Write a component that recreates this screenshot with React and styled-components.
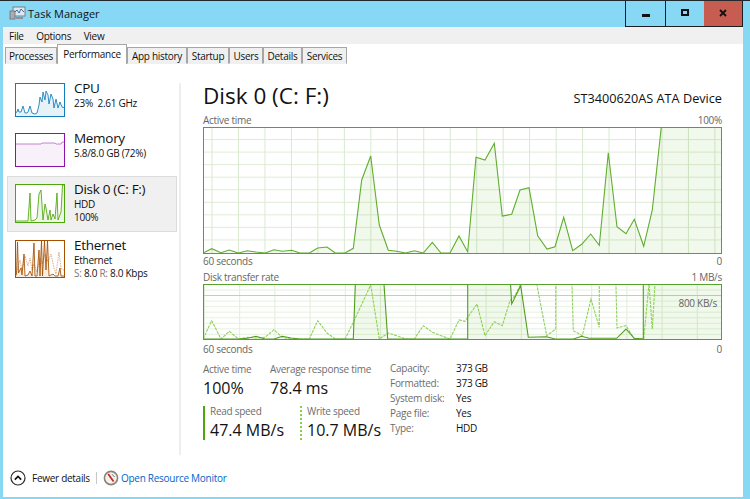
import styled, { createGlobalStyle } from "styled-components";

const sans = `"Open Sans", "Noto Sans", sans-serif`;

const GlobalStyle = createGlobalStyle`
    html, body {
        margin: 0;
        padding: 0;
        background: #87d8f5;
        overflow: hidden;
    }
    * { box-sizing: border-box; }
`;

const TABS = [
    { name: "Processes", width: 52 },
    { name: "Performance", width: 70 },
    { name: "App history", width: 60 },
    { name: "Startup", width: 42 },
    { name: "Users", width: 34 },
    { name: "Details", width: 39 },
    { name: "Services", width: 45 },
];

// graph samples, in pixels inside each chart
const ACTIVE_TIME = [
    [0, 126], [8.7, 121.7], [18, 125.7], [26.3, 123], [35.3, 126], [44.3, 123.7], [53, 125], [62, 126], [71, 122.7],
    [79.3, 124.3], [88.7, 123.3], [97, 126], [106.3, 126], [114.7, 121], [124, 120], [132.3, 126], [142, 126],
    [150.3, 121.3], [158.7, 53], [167.7, 29], [176.3, 98], [185.3, 123.3], [193.7, 124.3], [202.7, 126], [211.3, 123.7],
    [220.3, 126], [229.3, 115.3], [238, 126], [247, 126], [256, 109], [262, 120], [264.7, 124.7], [273, 30.3], [282, 33],
    [291.3, 16.3], [299.3, 89], [308.7, 87.3], [317, 63], [326, 60.7], [334.7, 108.7], [344, 122], [352, 119.7],
    [360.7, 90.3], [369.7, 123.7], [378.7, 117.3], [387.7, 107], [396.3, 118.3], [405.3, 25.7], [414, 99.7], [423, 106.7],
    [431.3, 92.3], [440.7, 119.3], [449.3, 83], [458.3, 0], [519, 0],
];

const WRITE_RATE = [
    [0, 55], [8.7, 36.7], [18, 55], [26.3, 47.3], [35.3, 55], [44.3, 53.3], [53, 54], [62, 53.3], [71, 45.7], [79.3, 53.3],
    [88.7, 55], [106.3, 55], [114.7, 36.7], [124, 49], [132.3, 55], [142, 55], [150.3, 38.3], [167.7, 1], [176.3, 55],
    [185.3, 49], [193.7, 51.7], [202.7, 55], [211.3, 55], [220.3, 41.7], [229.3, 48.3], [238, 51.7], [247, 55], [256, 36],
    [262, 37.3], [274, 20], [282, 51.7], [291.3, 37.7], [299.3, 41.7], [307, 16.7], [312, 11.7], [317.7, 0], [321, -10],
    [333, -10], [333.7, 0], [343.7, 51.7], [352.7, 45], [352.7, -10], [368.7, -10], [370.3, 46.7], [379.3, 51.7], [388, 15],
    [396.3, 43.3], [396.3, -10], [412.7, -10], [414, 44], [423, 41.7], [431.3, 55], [440.7, 55], [446, 0], [449.3, 45],
    [452, 0], [453, -10], [519, -10],
];

const READ_RATE = [
    [0, 55], [35.3, 55], [44.3, 54.3], [53, 52.3], [62, 55], [71, 55], [79.3, 52.3], [88, 54], [97, 55], [150.3, 55],
    [152.7, -10], [180.3, -10], [184.7, 55], [264.7, 55], [264.7, -10], [307, -10], [308.7, 20], [317.7, 1.7], [325.3, 53.3],
    [343.7, 52.7], [352, 55], [370.3, 55], [378.7, 52.3], [386, 54.3], [413.7, 54.3], [423, 45], [431.3, 54.3], [440.3, 55],
    [440.3, -10], [519, -10],
];

const CPU_THUMB = [
    [0, 30], [2, 29], [3, 26], [4, 29], [6, 29], [8, 23], [10, 30], [12, 30], [13, 29], [15, 23], [17, 30], [20, 31], [22, 30], [24, 22],
    [25, 14], [27, 19], [28, 9], [30, 17], [31, 8], [33, 12], [34, 21], [36, 11], [38, 16], [39, 25], [41, 16], [43, 25], [45, 19], [47, 24], [50, 25],
];
const MEM_THUMB = [[0, 11], [26, 11], [27, 10], [40, 10], [41, 11], [46, 11], [47, 9], [50, 9]];
const DISK_THUMB = [
    [0, 37], [13, 37], [15, 9], [16, 37], [20, 36], [22, 34], [24, 10], [26, 6], [28, 36], [30, 20], [31, 24], [33, 36], [35, 26], [36, 36], [38, 30],
    [40, 35], [42, 9], [43, 36], [46, 28], [47.5, 1], [50, 1],
];
const NET_SOLID = [
    [0, 37], [1.5, 34], [2.5, 2], [3.5, 33], [6, 28], [7, 35], [9, 14], [10, 36], [13, 35], [15, 31], [17, 36], [19, 3], [20, 36], [22, 36], [24, 10], [25, 36],
    [26.5, 1], [27.5, 36], [29.5, 1], [31, 30], [32.5, 1], [34, 36], [38, 34], [40, 36], [43, 36], [45, 28], [46, 36], [50, 36],
];
const NET_DASHED = [
    [0, 37], [3, 27], [5, 20], [7, 30], [10, 16], [13, 26], [15, 18], [17, 30], [19, 24], [22, 32], [25, 18], [27, 24], [30, 14], [33, 22], [36, 14], [39, 28],
    [41, 34], [44, 12], [46, 28], [48, 30], [50, 30],
];

const toPoints = (pts) => pts.map(([x, y]) => `${x},${y}`).join(" ");

const range = (start, step, end) => {
    const out = [];
    for (let v = start; v < end; v += step) out.push(v);
    return out;
};

function Thumb({ color, height, data, dashed, fillOpacity = 0.1, lineOpacity = 0.85 }) {
    const closed = [[0, height], ...data, [50, height]];
    return (
        <ThumbBox $color={color} $height={height}>
            <svg width="48" height={height - 2} viewBox={`1 1 48 ${height - 2}`}>
                <polygon points={toPoints(closed)} fill={color} fillOpacity={fillOpacity} />
                {dashed && <polyline points={toPoints(dashed)} fill="none" stroke={color} strokeOpacity="0.45" strokeWidth="1" strokeDasharray="1.5 1" />}
                <polyline points={toPoints(data)} fill="none" stroke={color} strokeOpacity={lineOpacity} strokeWidth="1" />
            </svg>
        </ThumbBox>
    );
}

function ActiveChart() {
    const w = 517;
    const h = 125;
    return (
        <ChartBox $height={127}>
            <svg width={w} height={h} viewBox={`1 1 ${w} ${h}`}>
                {range(12.55, 12.55, 125).map((y) => <line key={y} x1="0" x2={w + 2} y1={y} y2={y} stroke="#dfecd7" strokeWidth="1" />)}
                {range(9, 26.47, 519).map((x) => <line key={x} x1={x} x2={x} y1="0" y2={h + 2} stroke="#d9e9cf" strokeWidth="1" />)}
                <polygon points={toPoints([[0, 127], ...ACTIVE_TIME, [519, 127]])} fill="#4da60c" fillOpacity="0.08" />
                <polyline points={toPoints(ACTIVE_TIME)} fill="none" stroke="#5fae2e" strokeWidth="1.1" />
            </svg>
        </ChartBox>
    );
}

function TransferChart() {
    const w = 517;
    const h = 54;
    return (
        <ChartBox $height={56}>
            <svg width={w} height={h} viewBox={`1 1 ${w} ${h}`}>
                {range(6, 5.55, 55).map((y) => <line key={y} x1="0" x2={w + 2} y1={y} y2={y} stroke="#e6f1df" strokeWidth="1" />)}
                {range(1.5, 35.2, 519).map((x) => <line key={x} x1={x} x2={x} y1="0" y2={h + 2} stroke="#e0edd8" strokeWidth="1" />)}
                <line x1="0" x2={w + 2} y1="11.5" y2="11.5" stroke="#b4dba0" strokeWidth="1" />
                <polygon points={toPoints([[0, 56], ...READ_RATE, [519, 56]])} fill="#4da60c" fillOpacity="0.08" />
                <polyline points={toPoints(WRITE_RATE)} fill="none" stroke="#8ed257" strokeWidth="1.1" strokeDasharray="3 1" />
                <polyline points={toPoints(READ_RATE)} fill="none" stroke="#4f9e1e" strokeWidth="1.1" />
            </svg>
            <ChartNote>800 KB/s</ChartNote>
        </ChartBox>
    );
}

export default function App() {
    return (
        <>
            <GlobalStyle />
            <Window>
                <TitleBar>
                    <AppTitle>
                        <svg width="17" height="14" viewBox="0 0 17 14">
                            <rect x="4" y="1" width="12" height="9" fill="#dfe7ee" stroke="#76808a" />
                            <polyline points="5,7 8,4 10,7 12,3 15,6" fill="none" stroke="#3f6f9f" strokeWidth="1" />
                            <rect x="1" y="5" width="5" height="8" fill="#a7adb3" stroke="#6a6f75" strokeWidth="0.8" />
                            <rect x="7" y="11" width="7" height="2" fill="#8d939a" />
                        </svg>
                        Task Manager
                    </AppTitle>
                    <Controls>
                        <ControlButton><MinGlyph /></ControlButton>
                        <ControlButton><MaxGlyph /></ControlButton>
                        <ControlButton $close>
                            <svg width="8" height="8" viewBox="0 0 8 8">
                                <path d="M1 1 L7 7 M7 1 L1 7" stroke="#111" strokeWidth="1.8" />
                            </svg>
                        </ControlButton>
                    </Controls>
                </TitleBar>

                <MenuBar>
                    <span>File</span>
                    <span>Options</span>
                    <span>View</span>
                </MenuBar>

                <TabStrip>
                    {TABS.map((t) => <Tab key={t.name} $width={t.width} $active={t.name === "Performance"}>{t.name}</Tab>)}
                </TabStrip>

                <Body>
                    <Sidebar>
                        <Item>
                            <Thumb color="#117dbb" height={34} data={CPU_THUMB} />
                            <ItemText>
                                <ItemName>CPU</ItemName>
                                <ItemSub>23%&nbsp; 2.61 GHz</ItemSub>
                            </ItemText>
                        </Item>
                        <Item>
                            <Thumb color="#8b12ae" height={34} data={MEM_THUMB} fillOpacity={0.06} lineOpacity={0.5} />
                            <ItemText>
                                <ItemName>Memory</ItemName>
                                <ItemSub>5.8/8.0 GB (72%)</ItemSub>
                            </ItemText>
                        </Item>
                        <Item $selected>
                            <Thumb color="#4da60c" height={39} data={DISK_THUMB} />
                            <ItemText>
                                <ItemName>Disk 0 (C: F:)</ItemName>
                                <ItemSub>HDD</ItemSub>
                                <ItemSub>100%</ItemSub>
                            </ItemText>
                        </Item>
                        <Item>
                            <Thumb color="#a74f01" height={38} data={NET_SOLID} dashed={NET_DASHED} />
                            <ItemText>
                                <ItemName>Ethernet</ItemName>
                                <ItemSub>Ethernet</ItemSub>
                                <ItemSub><Dim>S:</Dim> 8.0 <Dim>R:</Dim> 8.0 Kbps</ItemSub>
                            </ItemText>
                        </Item>
                    </Sidebar>

                    <Main>
                        <Heading>
                            <Title>Disk 0 (C: F:)</Title>
                            <Device>ST3400620AS ATA Device</Device>
                        </Heading>

                        <ChartLabels $gap={1}>
                            <span>Active time</span>
                            <span>100%</span>
                        </ChartLabels>
                        <ActiveChart />
                        <ChartLabels $gap={1}>
                            <span>60 seconds</span>
                            <span>0</span>
                        </ChartLabels>

                        <ChartLabels $gap={3}>
                            <span>Disk transfer rate</span>
                            <span>1 MB/s</span>
                        </ChartLabels>
                        <TransferChart />
                        <ChartLabels $gap={3}>
                            <span>60 seconds</span>
                            <span>0</span>
                        </ChartLabels>

                        <Stats>
                            <StatGrid>
                                <Stat>
                                    <StatLabel>Active time</StatLabel>
                                    <StatValue>100%</StatValue>
                                </Stat>
                                <Stat>
                                    <StatLabel>Average response time</StatLabel>
                                    <StatValue>78.4 ms</StatValue>
                                </Stat>
                                <Speed>
                                    <StatLabel>Read speed</StatLabel>
                                    <StatValue>47.4 MB/s</StatValue>
                                </Speed>
                                <Speed $dotted>
                                    <StatLabel>Write speed</StatLabel>
                                    <StatValue>10.7 MB/s</StatValue>
                                </Speed>
                            </StatGrid>
                            <Props>
                                <dt>Capacity:</dt><dd>373 GB</dd>
                                <dt>Formatted:</dt><dd>373 GB</dd>
                                <dt>System disk:</dt><dd>Yes</dd>
                                <dt>Page file:</dt><dd>Yes</dd>
                                <dt>Type:</dt><dd>HDD</dd>
                            </Props>
                        </Stats>
                    </Main>
                </Body>

                <Footer>
                    <svg width="16" height="16" viewBox="0 0 16 16">
                        <circle cx="8" cy="8" r="7" fill="#fff" stroke="#2b2b2b" strokeWidth="1.2" />
                        <path d="M4.8 9.6 L8 6.4 L11.2 9.6" fill="none" stroke="#111" strokeWidth="1.7" />
                    </svg>
                    <FooterText>Fewer details</FooterText>
                    <FooterDivider />
                    <svg width="16" height="16" viewBox="0 0 16 16">
                        <circle cx="8" cy="8" r="6.6" fill="#f4f1ea" stroke="#8b8378" strokeWidth="1.6" />
                        <path d="M5.2 4 L10.6 11.6" stroke="#c4262e" strokeWidth="1.7" />
                        <path d="M9 4.2 L11.6 7" stroke="#555" strokeWidth="0.8" />
                    </svg>
                    <ResourceLink>Open Resource Monitor</ResourceLink>
                </Footer>
            </Window>
        </>
    );
}

const Window = styled.div`
    width: 750px;
    height: 499px;
    display: flex;
    flex-direction: column;
    background: #87d8f5;
    border-top: 1px solid #23292c;
    font-family: ${sans};
    font-size: 10px;
    letter-spacing: -0.28px;
    color: #111;
`;

const TitleBar = styled.header`
    height: 26px;
    flex: none;
    display: flex;
    justify-content: space-between;
    padding: 0 7px 0 9px;
`;

const AppTitle = styled.div`
    display: flex;
    align-items: center;
    gap: 2px;
    font-size: 11px;
    letter-spacing: 0;
    padding-bottom: 2px;
`;

const Controls = styled.div`
    display: flex;
    height: 26px;
    border: solid #1b1f21;
    border-width: 0 1px 1px 1px;
`;

const ControlButton = styled.div`
    width: ${(p) => (p.$close ? "38px" : "39px")};
    display: flex;
    align-items: center;
    justify-content: center;
    background: ${(p) => (p.$close ? "#c75c50" : "transparent")};
    border-left: ${(p) => (p.$close ? "none" : "1px solid #1b1f21")};
    &:first-child { border-left: none; }
    padding-bottom: 1px;
`;

const MinGlyph = styled.span`
    width: 8px;
    height: 3px;
    margin-top: 4px;
    background: #111;
`;

const MaxGlyph = styled.span`
    width: 8px;
    height: 7px;
    border: 2px solid #111;
    margin-top: -2px;
`;

const MenuBar = styled.nav`
    height: 17px;
    flex: none;
    margin: 0 7px 0 3px;
    padding: 0 0 0 6px;
    display: flex;
    align-items: center;
    gap: 12.5px;
    background: #f0f0f0;
`;

const TabStrip = styled.div`
    height: 20px;
    flex: none;
    margin: 0 7px 0 3px;
    padding: 0 0 0 2px;
    display: flex;
    align-items: flex-end;
    background: #fff;
`;

const Tab = styled.div`
    width: ${(p) => p.$width}px;
    height: ${(p) => (p.$active ? "20px" : "17px")};
    padding-bottom: ${(p) => (p.$active ? "2px" : "0")};
    display: flex;
    align-items: center;
    justify-content: center;
    background: ${(p) => (p.$active ? "#fff" : "#f0f0f0")};
    border: 1px solid #a6a6a6;
    border-bottom: ${(p) => (p.$active ? "none" : "1px solid #f0f0f0")};
`;

const Body = styled.main`
    height: 391px;
    flex: none;
    margin: 0 7px 0 3px;
    padding-top: 19px;
    display: flex;
    background: #fff;
`;

const Sidebar = styled.aside`
    width: 178px;
    height: 372px;
    padding-left: 4px;
    padding-right: 2px;
    display: flex;
    flex-direction: column;
    gap: 8px;
    border-right: 2px solid #eeeeee;
`;

const Item = styled.div`
    display: flex;
    gap: 9px;
    align-items: flex-start;
    min-height: ${(p) => (p.$selected ? "55px" : "42px")};
    padding: ${(p) => (p.$selected ? "7px" : "0 8px")};
    margin-top: ${(p) => (p.$selected ? "-7px" : "0")};
    background: ${(p) => (p.$selected ? "#f0f0f0" : "transparent")};
    border: ${(p) => (p.$selected ? "1px solid #dcdcdc" : "none")};
`;

const ThumbBox = styled.div`
    width: 50px;
    height: ${(p) => p.$height}px;
    flex: none;
    border: 1px solid ${(p) => p.$color};
    background: #fff;
    svg { display: block; }
`;

const ItemText = styled.div`
    display: flex;
    flex-direction: column;
    margin-top: -3px;
`;

const ItemName = styled.div`
    font-size: 13.5px;
    letter-spacing: -0.3px;
    line-height: 17px;
`;

const ItemSub = styled.div`
    line-height: 13px;
`;

const Dim = styled.span`
    color: #777;
`;

const Main = styled.section`
    flex: 1;
    min-width: 0;
    padding: 0 21px 0 22px;
    display: flex;
    flex-direction: column;
`;

const Heading = styled.div`
    height: 30px;
    display: flex;
    justify-content: space-between;
    align-items: center;
`;

const Title = styled.h1`
    margin: -5px 0 0;
    font-size: 22.5px;
    font-weight: 400;
    letter-spacing: 0;
    line-height: 24px;
`;

const Device = styled.div`
    font-size: 12.7px;
    letter-spacing: 0;
    margin-top: -1px;
`;

const ChartLabels = styled.div`
    height: 13px;
    padding-bottom: 2px;
    margin-top: ${(p) => p.$gap}px;
    display: flex;
    justify-content: space-between;
    align-items: center;
    color: #666;
`;

const ChartBox = styled.div`
    position: relative;
    width: 519px;
    height: ${(p) => p.$height}px;
    border: 1px solid #53a329;
    background: #fff;
    overflow: hidden;
    svg { display: block; }
`;

const ChartNote = styled.span`
    position: absolute;
    right: 4px;
    top: 11px;
    color: #666;
`;

const Stats = styled.div`
    margin-top: 6px;
    display: flex;
    gap: 10px;
`;

const StatGrid = styled.div`
    display: grid;
    grid-template-columns: 67px 97px;
    grid-template-rows: 44px 34px;
    width: 177px;
`;

const StatLabel = styled.div`
    line-height: 14px;
    margin-bottom: 1px;
    color: #6d6d6d;
    white-space: nowrap;
`;

const StatValue = styled.div`
    font-size: 16px;
    letter-spacing: 0;
    line-height: 22px;
    color: #111;
    white-space: nowrap;
`;

const Stat = styled.div`
    display: flex;
    flex-direction: column;
`;

const Speed = styled(Stat)`
    padding-left: 5px;
    border-left: 2px ${(p) => (p.$dotted ? "dotted #86cf4a" : "solid #4da60c")};
    &:nth-child(4) { margin-left: 30px; }
    ${StatLabel} {
        line-height: 10px;
        margin-bottom: 4px;
    }
    ${StatValue} {
        line-height: 21px;
    }
`;

const Props = styled.dl`
    margin: -2px 0 0;
    display: grid;
    grid-template-columns: 66px auto;
    grid-auto-rows: 15.2px;
    align-items: center;
    align-self: flex-start;
    dt { color: #6d6d6d; }
    dd { margin: 0; color: #111; }
`;

const Footer = styled.footer`
    height: 42px;
    flex: none;
    margin: 0 7px 2px 3px;
    padding: 4px 0 0 7px;
    display: flex;
    align-items: center;
    background: #fff;
`;

const FooterText = styled.span`
    margin-left: 6px;
    width: 57px;
    white-space: nowrap;
`;

const FooterDivider = styled.span`
    width: 1px;
    height: 12px;
    margin: 0 6px 0 7px;
    background: #c8c8c8;
`;

const ResourceLink = styled.span`
    margin-left: 2px;
    color: #0066cc;
`;
